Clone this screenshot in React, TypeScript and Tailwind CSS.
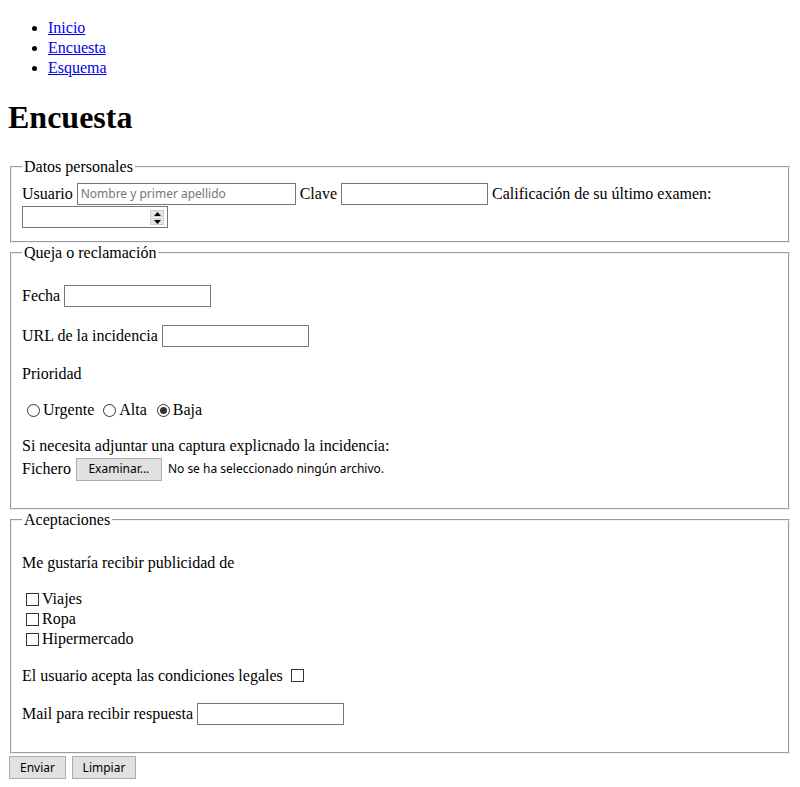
import React from "react";

const sans = "font-['Noto_Sans',sans-serif]";

function TextBox({ w, className = "", children }: { w: string; className?: string; children?: React.ReactNode }) {
  return (
    <span
      className={`relative inline-flex items-center h-[22px] border border-[#767676] bg-white shrink-0 ${w} ${className}`}
    >
      {children}
    </span>
  );
}

function Radio({ checked = false, className = "" }: { checked?: boolean; className?: string }) {
  return (
    <span
      className={`inline-flex items-center justify-center w-[13px] h-[13px] rounded-full border border-[#333] bg-white shrink-0 ${className}`}
    >
      {checked && <span className="block w-[7px] h-[7px] rounded-full bg-[#333]" />}
    </span>
  );
}

function Check({ className = "" }: { className?: string }) {
  return <span className={`inline-block w-[13px] h-[13px] border border-[#333] bg-white shrink-0 ${className}`} />;
}

function Button({ w, className = "", children }: { w: string; className?: string; children: React.ReactNode }) {
  return (
    <span
      className={`inline-flex items-center justify-center h-[23px] bg-[#e1e1e1] border border-[#adadad] text-[12px] leading-[16px] text-black shrink-0 ${sans} ${w} ${className}`}
    >
      {children}
    </span>
  );
}

const fieldsetCls =
  "mx-[2px] border-2 [border-style:groove] border-[#f0f0f0] px-[10px] pb-[10px] min-w-0";
const legendCls = "px-[2px] leading-[20px]";

export default function App() {
  return (
    <div className="min-h-[787px] bg-white text-black px-[8px] pt-[18px] font-['Liberation_Serif',serif] text-[16px] leading-[20px]">
      <ul className="list-disc pl-[40px]">
        {["Inicio", "Encuesta", "Esquema"].map((t) => (
          <li key={t} className="h-[20px]">
            <a href="#" className="text-[#0000ee] underline">
              {t}
            </a>
          </li>
        ))}
      </ul>

      <h1 className="mt-[21px] mb-[21px] text-[32px] leading-[37px] font-bold">Encuesta</h1>

      <fieldset className={`${fieldsetCls} pt-[5px]`}>
        <legend className={legendCls}>Datos personales</legend>
        <div className="flex items-center h-[24px] whitespace-nowrap">
          <span>Usuario</span>
          <TextBox w="w-[219px]" className="ml-[4px]">
            <span className={`pl-[3px] text-[12px] text-[#757575] ${sans}`}>Nombre y primer apellido</span>
          </TextBox>
          <span className="ml-[4px]">Clave</span>
          <TextBox w="w-[147px]" className="ml-[4px]" />
          <span className="ml-[4px]">Calificación de su último examen:</span>
        </div>
        <div className="flex items-start h-[25px]">
          <TextBox w="w-[146px]">
            <span className="absolute right-[3px] top-[3px] w-[14px] h-[15px] flex flex-col gap-[1px]">
              <span className="flex-1 flex items-center justify-center bg-[#e5e5e5] border border-[#cfcfcf]">
                <svg width="7" height="4" viewBox="0 0 7 4">
                  <polygon points="3.5,0 7,4 0,4" fill="#000" />
                </svg>
              </span>
              <span className="flex-1 flex items-center justify-center bg-[#e5e5e5] border border-[#cfcfcf]">
                <svg width="7" height="4" viewBox="0 0 7 4">
                  <polygon points="0,0 7,0 3.5,4" fill="#000" />
                </svg>
              </span>
            </span>
          </TextBox>
        </div>
      </fieldset>

      <fieldset className={`${fieldsetCls} pt-[5px]`}>
        <legend className={legendCls}>Queja o reclamación</legend>
        <div className="mt-[16px] flex items-center h-[24px]">
          <span>Fecha</span>
          <TextBox w="w-[147px]" className="ml-[4px]" />
        </div>
        <div className="mt-[16px] flex items-center h-[24px]">
          <span>URL de la incidencia</span>
          <TextBox w="w-[147px]" className="ml-[4px]" />
        </div>
        <p className="mt-[16px] h-[20px]">Prioridad</p>
        <div className="mt-[16px] flex items-center h-[20px]">
          <Radio className="ml-[5px] mr-[3px]" />
          <span>Urgente</span>
          <Radio className="ml-[9px] mr-[3px]" />
          <span>Alta</span>
          <Radio checked className="ml-[10px] mr-[3px]" />
          <span>Baja</span>
        </div>
        <p className="mt-[16px] h-[20px]">Si necesita adjuntar una captura explicnado la incidencia:</p>
        <div className="flex items-center h-[26px] mb-[16px]">
          <span>Fichero</span>
          <Button w="w-[86px]" className="ml-[5px]">
            Examinar...
          </Button>
          <span className={`ml-[6px] text-[12px] ${sans}`}>No se ha seleccionado ningún archivo.</span>
        </div>
      </fieldset>

      <fieldset className={`${fieldsetCls} pt-[7px]`}>
        <legend className={legendCls}>Aceptaciones</legend>
        <p className="mt-[16px] h-[20px]">Me gustaría recibir publicidad de</p>
        <div className="mt-[16px]">
          {["Viajes", "Ropa", "Hipermercado"].map((t) => (
            <div key={t} className="flex items-center h-[20px]">
              <Check className="ml-[4px] mr-[3px]" />
              <span>{t}</span>
            </div>
          ))}
        </div>
        <div className="mt-[16px] flex items-center h-[21px]">
          <span>El usuario acepta las condiciones legales</span>
          <Check className="ml-[8px]" />
        </div>
        <div className="mt-[16px] mb-[16px] flex items-center h-[24px]">
          <span>Mail para recibir respuesta</span>
          <TextBox w="w-[147px]" className="ml-[4px]" />
        </div>
      </fieldset>

      <div className="mt-[2px] flex">
        <Button w="w-[57px]" className="ml-[1px]">
          Enviar
        </Button>
        <Button w="w-[64px]" className="ml-[6px]">
          Limpiar
        </Button>
      </div>
    </div>
  );
}
